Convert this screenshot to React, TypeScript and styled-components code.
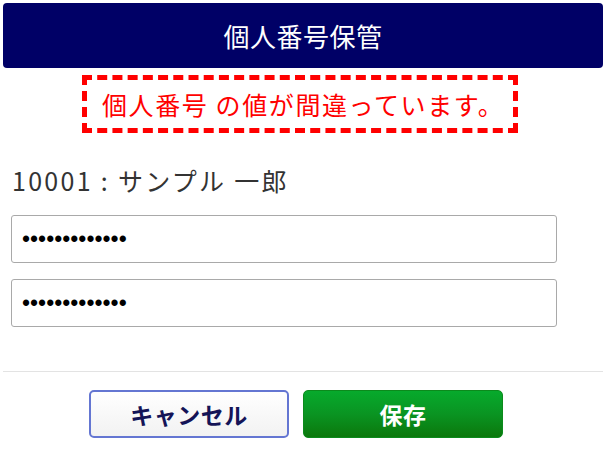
import { FC } from 'react';
import styled, { createGlobalStyle } from 'styled-components';

const GlobalStyle = createGlobalStyle`
  html, body {
    margin: 0;
    padding: 0;
    background: #ffffff;
  }
  body {
    font-family: "Noto Sans CJK JP", "Noto Sans", sans-serif;
  }
`;

const Page = styled.div`
  width: 606px;
  height: 462px;
  box-sizing: border-box;
  padding: 3px 3px 0;
  display: flex;
  flex-direction: column;
`;

const Header = styled.h1`
  margin: 0;
  height: 65px;
  display: flex;
  align-items: center;
  justify-content: center;
  background: #000066;
  border-radius: 4px;
  color: #ffffff;
  font-size: 26px;
  font-weight: 400;
  letter-spacing: 0.5px;
`;

const ErrorBox = styled.div`
  margin: 7px 0 0 79px;
  width: 436px;
  height: 58px;
  box-sizing: border-box;
  border: 5px dashed #ff0000;
  display: flex;
  align-items: center;
  padding-left: 15px;
  color: #ff0000;
  font-size: 25px;
  line-height: 1;
  letter-spacing: 1.6px;
  white-space: nowrap;
`;

const Name = styled.div`
  margin: 32px 0 0 9px;
  color: #333333;
  font-size: 25px;
  line-height: 30px;
  letter-spacing: 2.3px;
`;

const Fields = styled.div`
  margin: 20px 0 0 8px;
  display: flex;
  flex-direction: column;
  gap: 16px;
`;

const PasswordInput = styled.input`
  width: 546px;
  height: 48px;
  box-sizing: border-box;
  border: 1px solid #a9a9a9;
  border-radius: 3px;
  padding: 0 10px;
  font-family: "Liberation Sans", sans-serif;
  font-size: 23px;
  color: #000000;
  background: #ffffff;
  outline: none;
`;

const Divider = styled.hr`
  margin: 44px 0 0;
  border: none;
  border-top: 1px solid #e3e3e3;
  height: 0;
`;

const Actions = styled.div`
  margin-top: 18px;
  padding-right: 14px;
  display: flex;
  justify-content: center;
  gap: 14px;
`;

const Button = styled.button<{ $primary?: boolean }>`
  width: 200px;
  height: 48px;
  box-sizing: border-box;
  border-radius: 5px;
  font-family: "Noto Sans CJK JP", sans-serif;
  font-size: 23px;
  font-weight: 700;
  letter-spacing: 0.5px;
  cursor: pointer;
  border: ${ (p) => (p.$primary ? '1px solid #0c8a1c' : '2px solid #6476d2') };
  color: ${ (p) => (p.$primary ? '#ffffff' : '#141457') };
  background: ${ (p) => (p.$primary
    ? 'linear-gradient(to bottom, #07aa2c 0%, #0a9422 50%, #0b780c 100%)'
    : 'linear-gradient(to bottom, #ffffff 0%, #f2f2f2 100%)') };
`;

const App: FC = () => {
  return (
    <>
      <GlobalStyle />
      <Page>
        <Header>個人番号保管</Header>
        <ErrorBox>個人番号 の値が間違っています。</ErrorBox>
        <Name>10001 : サンプル 一郎</Name>
        <Fields>
          <PasswordInput type="password" defaultValue="1234567890123" />
          <PasswordInput type="password" defaultValue="1234567890123" />
        </Fields>
        <Divider />
        <Actions>
          <Button>キャンセル</Button>
          <Button $primary>保存</Button>
        </Actions>
      </Page>
    </>
  );
};

export default App;
